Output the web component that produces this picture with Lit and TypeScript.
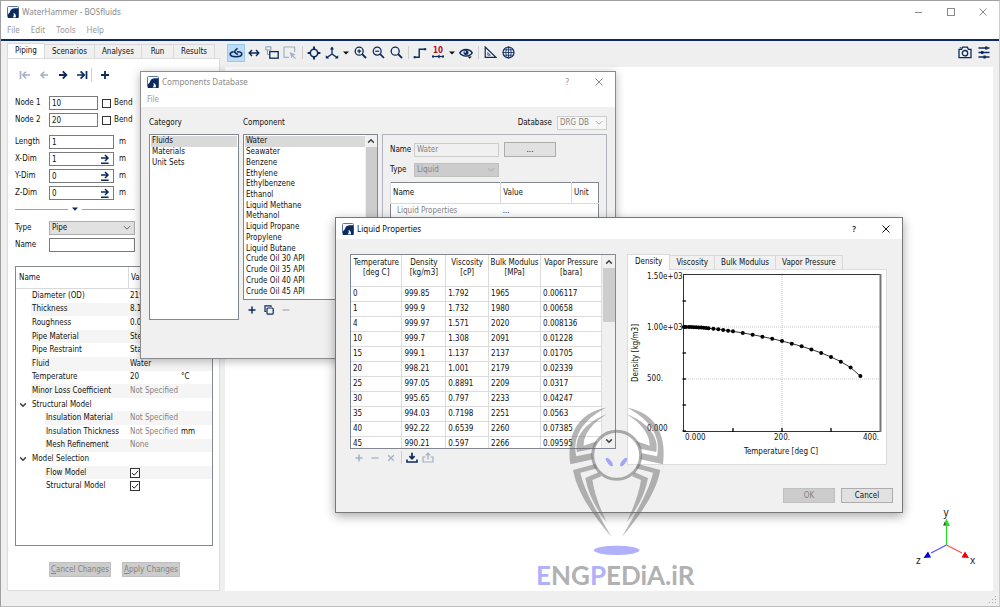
import { LitElement, html, css, svg, nothing } from "lit";
import { customElement } from "lit/decorators.js";
import { classMap } from "lit/directives/class-map.js";

const ic = (w: number, h: number, body: unknown) =>
  html`<svg class="ic" width=${w} height=${h} viewBox="0 0 ${w} ${h}" aria-hidden="true">${body}</svg>`;

const icons = {
  app: ic(12, 12, svg`<rect x=".5" y=".5" width="11" height="11" rx="1" fill="#f4f7fb" stroke="#5c779e"/><path d="M1 8.2C2.2 7.6 3 6.4 3.4 4.8C4 2.8 5.6 2.2 11.5 2.2V12H8.8C9.4 9.6 8.6 7.2 6.4 7C7.2 8.4 6.8 10.4 5.2 12H1Z" fill="#0b2a5e"/>`),
  chevron: ic(8, 6, svg`<path d="M1 1.2L4 4.2L7 1.2" fill="none" stroke="#666"/>`),
  chevronPale: ic(8, 6, svg`<path d="M1 1.2L4 4.2L7 1.2" fill="none" stroke="#aaa"/>`),
  chevronUp: ic(8, 6, svg`<path d="M1.2 4.6L4 1.8L6.8 4.6" fill="none" stroke="#444" stroke-width="1.5"/>`),
  chevronDown: ic(8, 6, svg`<path d="M1.2 1.4L4 4.2L6.8 1.4" fill="none" stroke="#444" stroke-width="1.5"/>`),
  caret: ic(6, 4, svg`<path d="M0 .5H6L3 3.5Z" fill="#111"/>`),
  caretNavy: ic(6, 4, svg`<path d="M0 .5H6L3 3.8Z" fill="#0b2a5e"/>`),
  close: ic(10, 10, svg`<path d="M1.5 1.5L8.5 8.5M8.5 1.5L1.5 8.5" fill="none" stroke="currentColor"/>`),
  min: ic(10, 10, svg`<path d="M1 5.5H8" stroke="currentColor"/>`),
  max: ic(10, 10, svg`<rect x="1.5" y="1.5" width="7" height="7" fill="none" stroke="currentColor"/>`),
  first: ic(12, 10, svg`<path d="M1.5 1V9M11 5H4M7 1.8L3.8 5L7 8.2" fill="none" stroke="currentColor" stroke-width="1.6"/>`),
  prev: ic(10, 10, svg`<path d="M9 5H2M5.2 1.8L2 5L5.2 8.2" fill="none" stroke="currentColor" stroke-width="1.6"/>`),
  next: ic(10, 10, svg`<path d="M1 5H8M4.8 1.4L8.4 5L4.8 8.6" fill="none" stroke="currentColor" stroke-width="1.8"/>`),
  last: ic(12, 10, svg`<path d="M10.5 1V9M1 5H8M4.6 1.4L8.2 5L4.6 8.6" fill="none" stroke="currentColor" stroke-width="1.7"/>`),
  plus: ic(10, 10, svg`<path d="M5 1V9M1 5H9" stroke="currentColor" stroke-width="1.8"/>`),
  plusSmall: ic(8, 8, svg`<path d="M4 .5V7.5M.5 4H7.5" stroke="currentColor" stroke-width="1.5"/>`),
  minus: ic(8, 8, svg`<path d="M.5 4H7.5" stroke="currentColor" stroke-width="1.3"/>`),
  cross: ic(8, 8, svg`<path d="M1.2 1.2L6.8 6.8M6.8 1.2L1.2 6.8" stroke="currentColor" stroke-width="1.3"/>`),
  copy: ic(10, 10, svg`<path d="M2 6.5H1V.9H7V2" fill="none" stroke="currentColor" stroke-width="1.2"/><rect x="3" y="3" width="6.2" height="6.2" rx="1" fill="none" stroke="currentColor" stroke-width="1.2"/>`),
  toLine: ic(10, 10, svg`<path d="M1 4H8M5 1L8 4L5 7M1 9.3H8.6" fill="none" stroke="currentColor" stroke-width="1.5"/>`),
  save: ic(12, 11, svg`<path d="M1 7.5V10H11V7.5" fill="none" stroke="currentColor" stroke-width="1.6"/><path d="M6 .8V6.5M3.4 4.2L6 6.8L8.6 4.2" fill="none" stroke="currentColor" stroke-width="1.7"/>`),
  load: ic(12, 11, svg`<path d="M3.5 5H1V10H11V5H8.5" fill="none" stroke="currentColor" stroke-width="1.2"/><path d="M6 7.5V1.5M3.8 3.4L6 1.2L8.2 3.4" fill="none" stroke="currentColor" stroke-width="1.2"/>`),
  rotate: ic(14, 12, svg`<path d="M4.2 4.8C2.4 5.3 1.2 6 1.2 7C1.2 8.7 3.6 9.7 7 9.7S12.8 8.7 12.8 7C12.8 5.5 10.5 4.8 8 4.8" fill="none" stroke="currentColor" stroke-width="1.6"/><path d="M8.4 1.2L5.2 4.8L8.8 7.6" fill="none" stroke="currentColor" stroke-width="1.6"/>`),
  pan: ic(12, 10, svg`<path d="M1.4 5H10.6M4 2L1.2 5L4 8M8 2L10.8 5L8 8" fill="none" stroke="currentColor" stroke-width="1.4"/>`),
  zoomBox: ic(14, 14, svg`<path d="M.8.8H6V4H.8ZM2.5 4V8.5H4" fill="none" stroke="#8b9cba"/><rect x="4.8" y="5.6" width="8.4" height="6.6" fill="none" stroke="currentColor" stroke-width="1.3"/>`),
  select: ic(14, 14, svg`<path d="M6 11.4H1V1H11.6V6" fill="none" stroke="#a3afc4" stroke-width="1.2"/><path d="M6.6 6L12.8 8.4L10.2 9.4L13 12.2L12 13L9.4 10.2L8.4 12.6Z" fill="#a3afc4"/>`),
  center: ic(14, 14, svg`<circle cx="7" cy="7" r="3.7" fill="none" stroke="currentColor" stroke-width="1.6"/><path d="M7 .6V3.6M7 10.4V13.4M.6 7H3.6M10.4 7H13.4" stroke="currentColor" stroke-width="2"/>`),
  axes: ic(14, 14, svg`<path d="M7 1.6V8L1.8 11.6M7 8L12.2 11.6" fill="none" stroke="currentColor" stroke-width="1.3"/><path d="M5 3.4L7 .6L9 3.4ZM.8 9.2V12.4H4.2ZM13.2 9.2V12.4H9.8Z" fill="currentColor"/>`),
  zoomIn: ic(13, 13, svg`<circle cx="5.2" cy="5.2" r="4" fill="none" stroke="currentColor" stroke-width="1.3"/><path d="M8.2 8.2L12 12" stroke="currentColor" stroke-width="1.9"/><path d="M3.2 5.2H7.2M5.2 3.2V7.2" stroke="currentColor" stroke-width="1.2"/>`),
  zoomOut: ic(13, 13, svg`<circle cx="5.2" cy="5.2" r="4" fill="none" stroke="currentColor" stroke-width="1.2"/><path d="M8.2 8.2L12 12" stroke="currentColor" stroke-width="1.7"/><path d="M3.2 5.2H7.2" stroke="currentColor" stroke-width="1.2"/>`),
  zoomFit: ic(13, 13, svg`<circle cx="5.2" cy="5.2" r="4" fill="none" stroke="currentColor" stroke-width="1.3"/><path d="M8.2 8.2L12 12" stroke="currentColor" stroke-width="1.9"/>`),
  step: ic(14, 12, svg`<path d="M1 10.2H6.2V2.2H13" fill="none" stroke="currentColor" stroke-width="1.4"/><path d="M.6 9.2H2.6V11.2H.6ZM11.2 1.2H13.2V3.2H11.2Z" fill="currentColor"/>`),
  ten: ic(14, 14, svg`<text x="7" y="6.6" text-anchor="middle" font-size="8" font-weight="700" font-family="DejaVu Sans Condensed" fill="#b3121d">10</text><path d="M1.4 10.5H12.6" stroke="currentColor" stroke-width="1.2"/><path d="M1 9.5H3V11.5H1ZM11 9.5H13V11.5H11ZM5.8 10.5L8.6 8.4V12.6Z" fill="currentColor"/>`),
  eye: ic(14, 12, svg`<path d="M.8 5.8C3.4 1.4 10.6 1.4 13.2 5.8C10.6 10 3.4 10 .8 5.8Z" fill="none" stroke="currentColor" stroke-width="1.4"/><circle cx="7" cy="5.6" r="2.5" fill="currentColor"/><circle cx="6.2" cy="4.8" r=".9" fill="#eee"/><path d="M8.6 9.4H12.8L10.7 11.8Z" fill="#111"/>`),
  triangle: ic(13, 13, svg`<path d="M1.2 1V11.4H12Z" fill="none" stroke="currentColor" stroke-width="1.2"/><path d="M3.8 6.6V9.2H6.4Z" fill="none" stroke="currentColor" stroke-width=".7"/>`),
  globe: ic(13, 13, svg`<circle cx="6.5" cy="6.5" r="5.5" fill="none" stroke="currentColor" stroke-width="1.2"/><ellipse cx="6.5" cy="6.5" rx="2.6" ry="5.5" fill="none" stroke="currentColor" stroke-width=".8"/><path d="M6.5 1V12M1 6.5H12M1.8 3.8H11.2M1.8 9.2H11.2" stroke="currentColor" stroke-width=".8"/>`),
  camera: ic(14, 13, svg`<path d="M1 3.4H3.6L4.6 1.2H9.4L10.4 3.4H13V11.6H1Z" fill="none" stroke="currentColor" stroke-width="1.3"/><circle cx="7" cy="7.2" r="2.7" fill="none" stroke="currentColor" stroke-width="1.3"/><path d="M1.8 1.8H3.4" stroke="currentColor"/>`),
  sliders: ic(12, 13, svg`<path d="M.5 2H11.5M.5 6.5H11.5M.5 11H11.5" stroke="currentColor" stroke-width="1.3"/><path d="M7 .4H9.4V3.6H7ZM3 4.9H5.4V8.1H3ZM5.4 9.4H7.8V12.6H5.4Z" fill="currentColor"/>`),
};

const shared = css`
  *, *::before, *::after { box-sizing: border-box; }
  :host, button, input, select, table {
    font-family: "DejaVu Sans Condensed", "Noto Sans", sans-serif;
    font-size: 8px;
    line-height: 10px;
    color: #111;
  }
  :host { box-sizing: border-box; }
  svg { display: block; flex: none; }
  button { border: 0; background: none; padding: 0; margin: 0; display: flex; align-items: center; justify-content: center; white-space: nowrap; }
  ul { list-style: none; margin: 0; padding: 0; }
  .box { height: 14px; min-width: 0; width: 100%; border: 1px solid #7a7a7a; border-radius: 0; background: #fff; padding: 0 2px; margin: 0; outline: 0; }
  .box:disabled { border-color: #ccc; background: #f0f0f0; color: #838383; opacity: 1; }
  .stack { display: grid; align-items: center; }
  .stack > * { grid-area: 1 / 1; }
  .stack > svg, .stack > .in { justify-self: end; margin-right: 4px; }
  select.box { appearance: none; background: #e1e1e1; border-color: #adadad; }
  select.box:disabled { background: #ccc; border-color: #bfbfbf; color: #838383; }
  .push { height: 15px; background: #e1e1e1; border: 1px solid #adadad; }
  .push:disabled { background: #ccc; border-color: #bfbfbf; color: #838383; }
  .tabs { display: flex; align-items: flex-end; }
  .tabs button { height: 14px; padding: 0 7px; border: 1px solid #d9d9d9; border-bottom: 0; border-left: 0; background: #f0f0f0; }
  .tabs button.on { height: 16px; padding: 0 7px 2px; background: #fff; margin-bottom: -1px; border-left: 1px solid #d9d9d9; }
  .sep { width: 1px; height: 13px; background: #cfcfcf; }
  .navy { color: #0b2a5e; }
  .faint { color: #a3afc4; }
  .titlebar { display: flex; align-items: center; background: #fff; font-family: "Noto Sans", sans-serif; gap: 3px; }
  .grow { flex: 1; }
`;

type Row = { name: string; value?: string; unit?: string; kind?: "group" | "child"; muted?: boolean; check?: boolean };
const ROWS: Row[] = [
  { name: "Diameter (OD)", value: "219.1", unit: "mm" },
  { name: "Thickness", value: "8.18", unit: "mm" },
  { name: "Roughness", value: "0.046", unit: "mm" },
  { name: "Pipe Material", value: "Steel" },
  { name: "Pipe Restraint", value: "Standard" },
  { name: "Fluid", value: "Water" },
  { name: "Temperature", value: "20", unit: "°C" },
  { name: "Minor Loss Coefficient", value: "Not Specified", muted: true },
  { name: "Structural Model", kind: "group" },
  { name: "Insulation Material", value: "Not Specified", kind: "child", muted: true },
  { name: "Insulation Thickness", value: "Not Specified", unit: "mm", kind: "child", muted: true },
  { name: "Mesh Refinement", value: "None", kind: "child", muted: true },
  { name: "Model Selection", kind: "group" },
  { name: "Flow Model", kind: "child", check: true },
  { name: "Structural Model", kind: "child", check: true },
];

@customElement("piping-panel")
class PipingPanel extends LitElement {
  static styles = [shared, css`
    :host { display: flex; flex-direction: column; width: 213px; padding-top: 2px; }
    .tabs button { min-width: 32px; }
    .pane { flex: 1; display: flex; flex-direction: column; background: #fff; border: 1px solid #dcdcdc; padding: 9px 6px 13px 7px; }
    .nav { display: flex; align-items: center; height: 14px; padding-left: 4px; gap: 8px; }
    .nav button { width: 11px; }
    .nav .sep { margin: 0 -1px 0 -4px; height: 14px; }
    .form { display: grid; grid-template-columns: 34px 86px; row-gap: 3px; align-items: center; }
    .nav + .form { margin-top: 14px; }
    .line { display: flex; align-items: center; height: 14px; }
    .node .box { width: 49px; margin-right: 4px; }
    .node label { display: flex; align-items: center; gap: 3px; }
    .dim .stack, .dim > .box { width: 65px; margin-right: 5px; }
    .gap { margin-top: 5px; }
    .tick { appearance: none; width: 9px; height: 9px; margin: 0; border: 1px solid #333; background: #fff; }
    .rule { display: flex; align-items: center; gap: 4px; width: 120px; height: 6px; margin: 6px 0 9px; }
    .rule::before, .rule::after { content: ""; flex: 1; height: 1px; background: #a0a0a0; }
    .tree { flex: 1; margin-top: 14px; border: 1px solid #828790; }
    .head, .row { display: grid; grid-template-columns: 112px 53px 1fr; align-items: center; }
    .head { height: 22px; border-bottom: 1px solid #d9d9d9; }
    .head span { padding-left: 3px; align-self: stretch; display: flex; align-items: center; }
    .head span + span { border-left: 1px solid #d9d9d9; padding-left: 2px; }
    .rows { display: grid; grid-template-rows: repeat(15, 1fr); height: 204px; }
    .row.alt { background: linear-gradient(#f5f5f5, #f5f5f5) no-repeat 15px 0; }
    .row.alt.child { background-position: 29px 0; }
    .row .nm { padding-left: 16px; white-space: nowrap; }
    .row.child .nm { padding-left: 30px; }
    .row.group .nm { padding-left: 3px; display: flex; align-items: center; gap: 5px; }
    .row > :nth-child(2) { margin-left: 2px; white-space: nowrap; }
    .muted { color: #838383; }
    .on-tick { display: grid; }
    .on-tick > * { grid-area: 1 / 1; width: 10px; height: 10px; }
    .actions { display: flex; gap: 11px; padding-left: 34px; margin-top: 16px; }
    .actions .push { min-width: 57px; padding: 0 1px; }
  `];
  dim(id: string, label: string, v: string) {
    return html`<label for=${id}>${label}</label>
      <div class="line dim"><div class="stack"><input class="box" id=${id} .value=${v} /><button class="in navy" aria-label="Apply ${label}">${icons.toLine}</button></div>m</div>`;
  }
  render() {
    return html`
      <div class="tabs" role="tablist">
        <button class="on" role="tab">Piping</button><button role="tab">Scenarios</button><button role="tab">Analyses</button><button role="tab">Run</button><button role="tab">Results</button>
      </div>
      <div class="pane">
        <div class="nav navy">
          <button class="faint" aria-label="First">${icons.first}</button>
          <button class="faint" aria-label="Previous">${icons.prev}</button>
          <button class="navy" aria-label="Next">${icons.next}</button>
          <button class="navy" aria-label="Last">${icons.last}</button>
          <span class="sep"></span>
          <button class="navy" aria-label="Add">${icons.plus}</button>
        </div>
        <div class="form">
          <label for="n1">Node 1</label>
          <div class="line node"><input class="box" id="n1" .value=${"10"} /><label><input type="checkbox" class="tick" />Bend</label></div>
          <label for="n2">Node 2</label>
          <div class="line node"><input class="box" id="n2" .value=${"20"} /><label><input type="checkbox" class="tick" />Bend</label></div>
          <label class="gap" for="len">Length</label>
          <div class="line dim gap"><input class="box" id="len" .value=${"1"} />m</div>
          ${this.dim("dx", "X-Dim", "1")}${this.dim("dy", "Y-Dim", "0")}${this.dim("dz", "Z-Dim", "0")}
        </div>
        <div class="rule">${icons.caretNavy}</div>
        <div class="form">
          <label for="type">Type</label>
          <div class="stack"><select class="box" id="type"><option>Pipe</option></select>${icons.chevron}</div>
          <label for="nm">Name</label>
          <input class="box" id="nm" />
        </div>
        <div class="tree">
          <div class="head"><span>Name</span><span>Value</span></div>
          <div class="rows">
            ${ROWS.map((r, i) => html`<div class=${classMap({ row: true, child: r.kind === "child", group: r.kind === "group", alt: i % 2 === 1 })}>
              <span class="nm">${r.kind === "group" ? icons.chevronDown : nothing}${r.name}</span>
              ${r.check
                ? html`<span class="on-tick"><input type="checkbox" class="tick" checked aria-label=${r.name} /><svg viewBox="0 0 10 10"><path d="M2 5L4.2 7.2L8.2 2.8" fill="none" stroke="#222"/></svg></span>`
                : html`<span class=${classMap({ muted: !!r.muted })}>${r.value ?? ""}</span>`}
              <span>${r.unit ?? ""}</span></div>`)}
          </div>
        </div>
        <div class="actions">
          <button class="push" disabled><u>C</u>ancel Changes</button>
          <button class="push" disabled><u>A</u>pply Changes</button>
        </div>
      </div>`;
  }
}

const COMPONENTS = ["Water", "Seawater", "Benzene", "Ethylene", "Ethylbenzene", "Ethanol", "Liquid Methane", "Methanol", "Liquid Propane", "Propylene", "Liquid Butane", "Crude Oil 30 API", "Crude Oil 35 API", "Crude Oil 40 API", "Crude Oil 45 API"];

@customElement("components-dialog")
class ComponentsDialog extends LitElement {
  static styles = [shared, css`
    :host { display: flex; flex-direction: column; background: #f0f0f0; border: 1px solid #8c8c8c; box-shadow: 0 2px 9px rgba(0, 0, 0, .28); }
    .titlebar { height: 20px; padding: 0 11px 0 6px; color: #8a8a8a; }
    .titlebar button { color: #8a8a8a; font-family: "Noto Sans", sans-serif; }
    .titlebar .help { margin-right: 22px; }
    .menu { background: #fff; height: 16px; padding: 4px 6px 2px; color: #9a9a9a; }
    .body { flex: 1; display: grid; grid-template-columns: 90px 135px 1fr; column-gap: 4px; padding: 8px 8px 38px 8px; grid-template-rows: 16px 1fr; row-gap: 3px; }
    .body > .lab { align-self: center; }
    .db { display: flex; align-items: center; justify-content: flex-end; gap: 5px; }
    .db .stack { width: 50px; }
    .db select.box { background: #f7f7f7; border-color: #ccc; }
    .list { border: 1px solid #828790; background: #fff; padding: 1px 1px; }
    .list ul { display: grid; grid-auto-rows: 1fr; }
    .list li { display: flex; align-items: center; padding-left: 1px; }
    .list li.sel { background: #d9d9d9; }
    .cats ul { height: 32px; }
    .col { display: flex; flex-direction: column; min-height: 0; }
    .comps { display: flex; height: 166px; padding-right: 0; }
    .comps ul { flex: 1; height: 161px; }
    .bar { width: 12px; background: #f0f0f0; display: flex; flex-direction: column; align-items: center; padding-top: 3px; gap: 3px; margin: -1px 0; }
    .bar::after { content: ""; width: 11px; flex: 1; background: #cdcdcd; }
    .tools { display: flex; gap: 7px; padding: 5px 4px; align-items: center; }
    .tools button { width: 10px; height: 10px; }
    .props { border: 1px solid #b0b4ba; padding: 7px 7px; display: flex; flex-direction: column; gap: 5px; }
    .field { display: grid; grid-template-columns: 24px 85px 57px; align-items: center; height: 15px; }
    .field .push { margin-left: 5px; width: 52px; }
    .tab { border-collapse: collapse; width: 100%; background: #fff; border: 1px solid #828790; table-layout: fixed; }
    .tab th, .tab td { font-weight: 400; text-align: left; padding: 0 2px; border-left: 1px solid #d9d9d9; }
    .tab th { height: 21px; border-bottom: 1px solid #d9d9d9; }
    .tab td { height: 15px; border-left: 0; }
    .tab .p { color: #838383; padding-left: 6px; }
    .a { width: 53%; } .b { width: 34%; }
  `];
  render() {
    return html`
      <div class="titlebar">${icons.app}<span>Components Database</span><span class="grow"></span><button class="help" aria-label="Help">?</button><button aria-label="Close">${icons.close}</button></div>
      <div class="menu">File</div>
      <div class="body">
        <span class="lab">Category</span>
        <span class="lab">Component</span>
        <div class="db"><label for="db">Database</label><div class="stack"><select id="db" class="box" disabled><option>DRG DB</option></select>${icons.chevronPale}</div></div>
        <div class="list cats"><ul><li class="sel">Fluids</li><li>Materials</li><li>Unit Sets</li></ul></div>
        <div class="col">
          <div class="list comps"><ul>${COMPONENTS.map((c, i) => html`<li class=${i ? "" : "sel"}>${c}</li>`)}</ul><div class="bar">${icons.chevronUp}</div></div>
          <div class="tools"><button class="navy" aria-label="Add">${icons.plusSmall}</button><button class="navy" aria-label="Copy">${icons.copy}</button><button class="faint" aria-label="Remove">${icons.minus}</button></div>
        </div>
        <div class="props">
          <div class="field"><label for="cn">Name</label><input id="cn" class="box" disabled .value=${"Water"} /><button class="push">...</button></div>
          <div class="field"><label for="ct">Type</label><div class="stack"><select id="ct" class="box" disabled><option>Liquid</option></select>${icons.chevronPale}</div></div>
          <table class="tab"><thead><tr><th class="a">Name</th><th class="b">Value</th><th>Unit</th></tr></thead><tbody><tr><td class="p">Liquid Properties</td><td>...</td><td></td></tr></tbody></table>
        </div>
      </div>`;
  }
}

const HEAD = [["Temperature", "[deg C]"], ["Density", "[kg/m3]"], ["Viscosity", "[cP]"], ["Bulk Modulus", "[MPa]"], ["Vapor Pressure", "[bara]"]];
const DATA = [
  ["0", "999.85", "1.792", "1965", "0.006117"], ["1", "999.9", "1.732", "1980", "0.00658"], ["4", "999.97", "1.571", "2020", "0.008136"],
  ["10", "999.7", "1.308", "2091", "0.01228"], ["15", "999.1", "1.137", "2137", "0.01705"], ["20", "998.21", "1.001", "2179", "0.02339"],
  ["25", "997.05", "0.8891", "2209", "0.0317"], ["30", "995.65", "0.797", "2233", "0.04247"], ["35", "994.03", "0.7198", "2251", "0.0563"],
  ["40", "992.22", "0.6539", "2260", "0.07385"], ["45", "990.21", "0.597", "2266", "0.09595"],
];
const CURVE: [number, number][] = [
  ...DATA.map((r) => [Number(r[0]), Number(r[1])] as [number, number]),
  [50, 988], [60, 983], [70, 978], [80, 972], [90, 965], [100, 958], [120, 943], [140, 926], [160, 907], [180, 887], [200, 865],
  [220, 840], [240, 814], [260, 784], [280, 751], [300, 712], [320, 667], [340, 610], [360, 528],
];
const px = (t: number) => 56 + (t * 196) / 400;
const py = (d: number) => 161 - (d * 156) / 1500;

@customElement("liquid-dialog")
class LiquidDialog extends LitElement {
  static styles = [shared, css`
    :host { display: flex; flex-direction: column; background: #f0f0f0; border: 1px solid #777; box-shadow: 0 3px 10px rgba(0, 0, 0, .35); }
    .titlebar { height: 21px; padding: 0 11px 0 6px; }
    .titlebar button { color: #111; font-family: "Noto Sans", sans-serif; font-weight: 600; }
    .titlebar .help { margin-right: 22px; }
    .body { flex: 1; display: grid; grid-template-columns: 266px 1fr; column-gap: 11px; padding: 15px 15px 0 14px; }
    .frame { display: flex; border: 1px solid #828790; background: #fff; height: 195px; overflow: hidden; }
    table { border-collapse: collapse; flex: 1; table-layout: fixed; }
    th, td { font-weight: 400; text-align: left; padding: 0 2px; height: 15px; border: 1px solid #dcdcdc; white-space: nowrap; }
    tr > :first-child { border-left: 0; }
    thead th { height: 31px; text-align: center; vertical-align: top; padding: 3px 0 0; border-top: 0; }
    .bar { width: 13px; background: #f0f0f0; display: flex; flex-direction: column; align-items: center; padding: 4px 0; gap: 3px; }
    .thumb { width: 12px; height: 54px; background: #cdcdcd; }
    .tools { display: flex; align-items: center; gap: 6px; padding: 2px 4px; }
    .tools button { width: 10px; height: 11px; }
    .tools .sep { margin: 0 -1px; }
    .tabs button { padding: 0 6px; }
    .chart { background: #fff; border: 1px solid #dcdcdc; }
    .chart text { font-size: 8px; fill: #111; }
    .chart svg { width: 100%; height: auto; }
    .foot { display: flex; justify-content: flex-end; gap: 6px; padding: 0 9px 9px; }
    .foot .push { width: 52px; }
  `];
  render() {
    const ticksY = [0, 250, 500, 750, 1000, 1250];
    return html`
      <div class="titlebar">${icons.app}<span>Liquid Properties</span><span class="grow"></span><button class="help" aria-label="Help">?</button><button aria-label="Close">${icons.close}</button></div>
      <div class="body">
        <div>
          <div class="frame">
            <table>
              <colgroup><col style="width:51px" /><col style="width:44px" /><col style="width:43px" /><col style="width:52px" /><col style="width:61px" /></colgroup>
              <thead><tr>${HEAD.map((h) => html`<th>${h[0]}<br />${h[1]}</th>`)}</tr></thead>
              <tbody>${DATA.map((r) => html`<tr>${r.map((c) => html`<td>${c}</td>`)}</tr>`)}</tbody>
            </table>
            <div class="bar">${icons.chevronUp}<span class="thumb"></span><span class="grow"></span>${icons.chevronDown}</div>
          </div>
          <div class="tools">
            <button class="faint" aria-label="Add row">${icons.plusSmall}</button><button class="faint" aria-label="Remove row">${icons.minus}</button><button class="faint" aria-label="Clear">${icons.cross}</button>
            <span class="sep"></span>
            <button class="navy" aria-label="Import">${icons.save}</button><button class="faint" aria-label="Export">${icons.load}</button>
          </div>
        </div>
        <div>
          <div class="tabs" role="tablist"><button class="on" role="tab">Density</button><button role="tab">Viscosity</button><button role="tab">Bulk Modulus</button><button role="tab">Vapor Pressure</button></div>
          <div class="chart">
            <svg viewBox="0 0 258 194" role="img" aria-label="Density against temperature">
              <path d="M${px(200)} 5V161M56 ${py(1000)}H252M56 ${py(500)}H252" stroke="#c8c8c8" stroke-dasharray="1 1" fill="none"/>
              <rect x="55.5" y="4.5" width="197" height="157" fill="none" stroke="#333"/>
              <path d="M252.5 4V162" stroke="#777" stroke-width="2"/>
              ${ticksY.map((t) => svg`<path d="M54.5 ${py(t)}H58" stroke="#000" stroke-width="1.3"/>`)}
              ${[100, 200, 300].map((t) => svg`<path d="M${px(t)} 158V162" stroke="#000" stroke-width="1.3"/>`)}
              <polyline points=${CURVE.map(([t, d]) => `${px(t)},${py(d)}`).join(" ")} fill="none" stroke="#333"/>
              ${CURVE.map(([t, d]) => svg`<circle cx=${px(t)} cy=${py(d)} r="2" fill="#000"/>`)}
              <text x="19" y="9">1.50e+03</text><text x="19" y="60">1.00e+03</text><text x="19" y="111">500.</text><text x="19" y="161">0.000</text>
              <text x="57" y="170">0.000</text><text x="154" y="170" text-anchor="middle">200.</text><text x="251" y="170" text-anchor="end">400.</text>
              <text x="153" y="184" text-anchor="middle">Temperature [deg C]</text>
              <text transform="translate(10 83) rotate(-90)" text-anchor="middle">Density [kg/m3]</text>
            </svg>
          </div>
        </div>
      </div>
      <div class="foot"><button class="push" disabled>OK</button><button class="push">Cancel</button></div>`;
  }
}

@customElement("app-root")
class AppRoot extends LitElement {
  static styles = [shared, css`
    :host { display: flex; flex-direction: column; height: 100vh; position: relative; overflow: hidden; background: #efefef; border: 1px solid #a0a0a0; border-right-color: #ccc; border-bottom-color: #bbb; }
    .titlebar { height: 20px; padding: 1px 11px 0 6px; color: #8a8a8a; }
    .titlebar button { color: #8a8a8a; margin-left: 19px; }
    .menu { display: flex; gap: 11px; height: 18px; background: #fff; color: #9a9a9a; align-items: center; padding-left: 6px; font-family: "Noto Sans", sans-serif; }
    .blue { height: 2px; background: #0b2a66; }
    .main { flex: 1; display: flex; min-height: 0; padding: 0 0 1px 6px; }
    .right { flex: 1; display: flex; flex-direction: column; padding: 0 6px 0 5px; }
    .toolbar { display: flex; align-items: center; height: 26px; padding: 0 0 3px 2px; }
    .toolbar button { width: 18px; height: 18px; color: #0b2a5e; }
    .toolbar .dd { width: 10px; }
    .toolbar .sep { margin: 0 2px 0 3px; }
    .toolbar .act { background: #bcdcf5; outline: 1px solid #99c9ef; outline-offset: -1px; }
    .toolbar .cfg { margin-left: 1px; }
    .view { flex: 1; background: #fff; display: flex; justify-content: flex-end; align-items: flex-end; padding: 0 15px 19px; }
    .view svg { overflow: visible; }
    .view text { font-size: 10px; fill: #222; font-family: "Noto Sans", sans-serif; }
    .status { height: 14px; display: flex; justify-content: flex-end; align-items: flex-end; padding: 2px; }
    components-dialog { position: absolute; left: 139px; top: 70px; width: 476px; height: 288px; }
    liquid-dialog { position: absolute; left: 334px; top: 216px; width: 568px; height: 296px; }
    .mark { position: absolute; left: 533px; top: 404px; width: 166px; pointer-events: none; overflow: visible; }
    .mark text { font-family: Lato, sans-serif; font-weight: 700; font-size: 26px; fill: #b1b1b1; }
    .mark .v { fill: #b1b1fb; }
  `];
  btn(label: string, icon: unknown, cls = "") {
    return html`<button class=${cls} aria-label=${label}>${icon}</button>`;
  }
  render() {
    const legs = () => svg`
      <path d="M228 38C150 52 108 112 121 208L189 193L186 174L139 184C126 124 160 74 228 38Z"/>
      <path d="M230 58C168 82 132 124 141 171L190 161L202 138L161 152C160 116 190 82 230 58Z"/>
      <path d="M129 225L196 207L202 220L151 233C164 290 200 350 244 425C190 362 142 294 129 225Z"/>
      <path d="M166 249L206 232L214 244L187 255C194 300 212 344 230 382C196 338 174 296 166 249Z"/>`;
    return html`
      <div class="titlebar">${icons.app}<span>WaterHammer - BOSfluids</span><span class="grow"></span>
        ${this.btn("Minimize", icons.min)}${this.btn("Maximize", icons.max)}${this.btn("Close", icons.close)}</div>
      <div class="menu"><span>File</span><span>Edit</span><span>Tools</span><span>Help</span></div>
      <div class="blue"></div>
      <div class="main">
        <piping-panel></piping-panel>
        <div class="right">
          <div class="toolbar">
            ${this.btn("Rotate", icons.rotate, "act")}${this.btn("Pan", icons.pan)}${this.btn("Zoom box", icons.zoomBox)}${this.btn("Select", icons.select)}<span class="sep"></span>
            ${this.btn("Center", icons.center)}${this.btn("Axes", icons.axes)}${this.btn("Axes menu", icons.caret, "dd")}${this.btn("Zoom in", icons.zoomIn)}${this.btn("Zoom out", icons.zoomOut)}${this.btn("Zoom fit", icons.zoomFit)}<span class="sep"></span>
            ${this.btn("Route", icons.step)}${this.btn("Node numbers", icons.ten)}${this.btn("Number menu", icons.caret, "dd")}${this.btn("Visibility", icons.eye)}<span class="sep"></span>
            ${this.btn("Angle", icons.triangle)}${this.btn("Globe", icons.globe)}
            <span class="grow"></span>${this.btn("Snapshot", icons.camera)}${this.btn("Settings", icons.sliders, "cfg")}
          </div>
          <div class="view">
            <svg width="66" height="68" viewBox="912 504 66 68" role="img" aria-label="Axes">
              <path d="M946.5 545V524" stroke="#2be02b" stroke-width="1.3"/><path d="M946.5 545L931 553" stroke="#5050ff" stroke-width="1.3"/><path d="M946.5 545L962 553" stroke="#ff5050" stroke-width="1.3"/>
              <path d="M946.5 518.5L950 526H943Z" fill="#2be02b"/><path d="M943.5 525H946L944.5 521.5Z" fill="#4a4a4a"/>
              <path d="M923.5 558L928 551.5L931 557.5Z" fill="#0000d8"/><path d="M969 558L965 551.5L961.5 557.5Z" fill="#e80000"/>
              <text x="943.5" y="516">y</text><text x="970" y="564">x</text><text x="916" y="564">z</text>
            </svg>
          </div>
        </div>
      </div>
      <div class="status"><svg width="9" height="9" viewBox="0 0 9 9"><path d="M7 1h1v1H7zM4 4h1v1H4zM7 4h1v1H7zM1 7h1v1H1zM4 7h1v1H4zM7 7h1v1H7z" fill="#aaa"/></svg></div>
      <components-dialog></components-dialog>
      <liquid-dialog></liquid-dialog>
      <svg class="mark" viewBox="0 0 166 190" aria-label="ENGPEDIA.iR" role="img">
        <g transform="translate(-4 -10) scale(.33333)">
          <g fill="#6b6b6b" fill-opacity=".5">${legs()}</g>
          <g fill="#6b6b6b" fill-opacity=".5" transform="matrix(-1 0 0 1 520 0)">${legs()}</g>
          <circle cx="260" cy="181" r="72" fill="none" stroke="#6b6b6b" stroke-opacity=".55" stroke-width="9"/>
          <ellipse cx="238" cy="201" rx="6" ry="15" transform="rotate(-38 238 201)" fill="#a0a5f8"/>
          <ellipse cx="281" cy="201" rx="6" ry="15" transform="rotate(38 281 201)" fill="#a0a5f8"/>
          <ellipse cx="260" cy="466" rx="68" ry="14" fill="#b1b1fb"/>
        </g>
        <text x="2" y="180"><tspan class="v">E</tspan>NG<tspan class="v">P</tspan>EDiA.iR</text>
      </svg>`;
  }
}
